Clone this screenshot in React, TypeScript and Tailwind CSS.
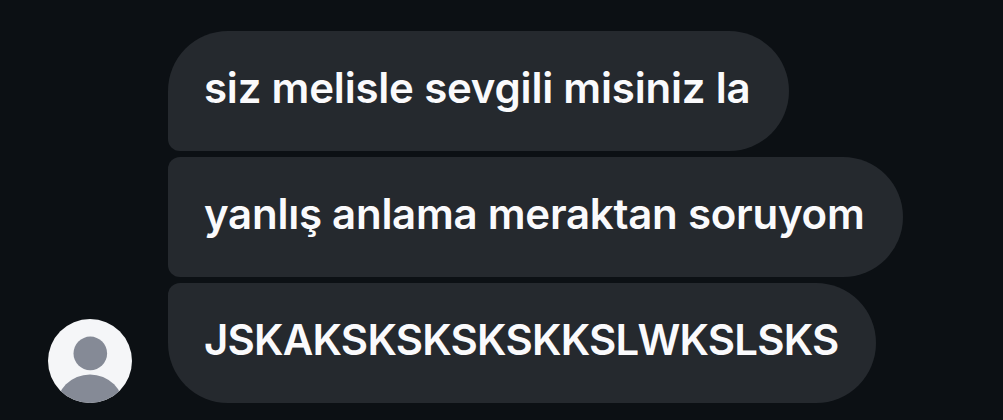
import React from "react";

const messages = [
  {
    text: "siz melisle sevgili misiniz la",
    bubble: "w-[621px] rounded-tl-[60px] rounded-bl-[12px]",
    label: "tracking-[-0.2px]",
  },
  {
    text: "yanlış anlama meraktan soruyom",
    bubble: "w-[735px] rounded-l-[12px]",
    label: "tracking-[-0.25px]",
  },
  {
    text: "JSKAKSKSKSKSKKSLWKSLSKS",
    bubble: "w-[708px] rounded-tl-[12px] rounded-bl-[60px]",
    label: "tracking-[-0.8px]",
  },
];

const Avatar = () => (
  <svg className="w-[84px] h-[84px] shrink-0" viewBox="0 0 84 84">
    <defs>
      <clipPath id="avatar">
        <circle cx="42" cy="42" r="42" />
      </clipPath>
    </defs>
    <g clipPath="url(#avatar)">
      <rect width="84" height="84" fill="#f5f6f8" />
      <circle cx="42.3" cy="34.4" r="16.8" fill="#858a96" />
      <circle cx="42" cy="89.4" r="34" fill="#858a96" />
    </g>
  </svg>
);

const App = () => {
  return (
    <main className="flex h-[420px] w-[1003px] items-end overflow-hidden bg-[#0c1014] pl-12 pb-[17px]">
      <Avatar />
      <div className="ml-9 flex flex-col gap-1.5">
        {messages.map((message) => (
          <div
            key={message.text}
            className={`flex h-[120px] items-center rounded-r-[60px] bg-[#25292e] pl-9 pb-1.5 ${message.bubble}`}
          >
            <span
              className={`whitespace-nowrap font-['Inter',sans-serif] text-[42px] font-semibold leading-none text-[#fafafc] ${message.label}`}
            >
              {message.text}
            </span>
          </div>
        ))}
      </div>
    </main>
  );
};

export default App;
